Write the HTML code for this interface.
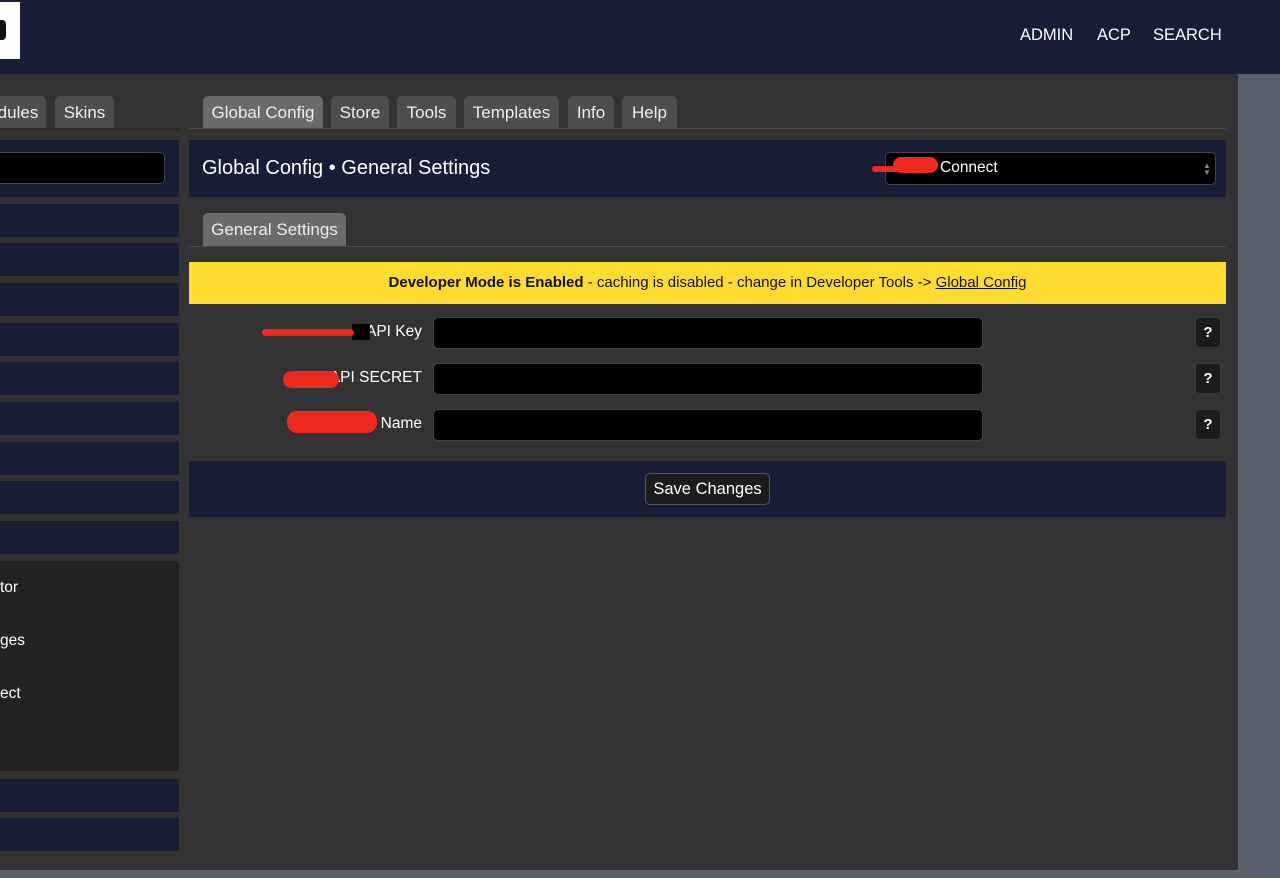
<!DOCTYPE html>
<html><head><meta charset="utf-8"><style>
*{box-sizing:border-box;margin:0;padding:0}
body{width:1280px;height:878px;overflow:hidden;background:#333;font-family:"Liberation Sans",sans-serif;color:#fff;position:relative}
.a{position:absolute}
.nav{background:#171e35}
.tab{position:absolute;top:96px;height:32px;background:#4e4e4e;border-radius:5px 5px 0 0;font-size:17px;line-height:33px;text-align:center;color:#eee}
.tab.on{background:#6b6b6b}
.inp{position:absolute;background:#000;border:1px solid #444;border-radius:5px}
.q{position:absolute;left:1195px;width:26px;height:31px;background:#1c1c1c;border:1px solid #3a3a3a;border-radius:4px;font-size:15px;font-weight:bold;text-align:center;line-height:29px}
.lbl{position:absolute;right:858px;font-size:15.5px}
.red{position:absolute;background:#ee2a1e;border-radius:10px}
</style></head><body>
<div class="a nav" style="left:0;top:0;width:1280px;height:74px"></div>
<div class="a" style="left:0;top:2px;width:20px;height:57px;background:#fff"></div>
<div class="a" style="left:0;top:20px;width:6px;height:20px;background:#111;border-radius:0 4px 4px 0"></div>
<div class="a" style="left:1020px;top:26px;font-size:16.5px">ADMIN</div>
<div class="a" style="left:1097px;top:26px;font-size:16.5px">ACP</div>
<div class="a" style="left:1153px;top:26px;font-size:16.5px">SEARCH</div>
<div class="a" style="left:1238px;top:74px;width:42px;height:804px;background:#5b616c"></div>
<div class="a" style="left:0;top:870px;width:1238px;height:8px;background:#5b616c"></div>

<div class="tab" style="left:-10px;width:56px">dules</div>
<div class="tab" style="left:55px;width:59px">Skins</div>
<div class="a" style="left:0;top:128px;width:179px;height:2px;background:#2a2a2a"></div>
<div class="a nav" style="left:0;top:140px;width:179px;height:57px"></div>
<div class="inp" style="left:-5px;top:152px;width:170px;height:32px"></div>
<div class="a nav" style="left:0;top:204px;width:179px;height:33px"></div>
<div class="a nav" style="left:0;top:243px;width:179px;height:33px"></div>
<div class="a nav" style="left:0;top:283px;width:179px;height:33px"></div>
<div class="a nav" style="left:0;top:323px;width:179px;height:33px"></div>
<div class="a nav" style="left:0;top:362px;width:179px;height:33px"></div>
<div class="a nav" style="left:0;top:402px;width:179px;height:33px"></div>
<div class="a nav" style="left:0;top:442px;width:179px;height:33px"></div>
<div class="a nav" style="left:0;top:481px;width:179px;height:33px"></div>
<div class="a nav" style="left:0;top:521px;width:179px;height:33px"></div>
<div class="a" style="left:0;top:561px;width:179px;height:210px;background:#232323"></div>
<div class="a" style="left:0;top:579px;font-size:15.5px">tor</div>
<div class="a" style="left:0;top:632px;font-size:15.5px">ges</div>
<div class="a" style="left:0;top:685px;font-size:15.5px">ect</div>
<div class="a nav" style="left:0;top:779px;width:179px;height:33px"></div>
<div class="a nav" style="left:0;top:818px;width:179px;height:33px"></div>

<div class="tab on" style="left:203px;width:120px">Global Config</div>
<div class="tab" style="left:331px;width:58px">Store</div>
<div class="tab" style="left:397px;width:59px">Tools</div>
<div class="tab" style="left:464px;width:95px">Templates</div>
<div class="tab" style="left:568px;width:46px">Info</div>
<div class="tab" style="left:622px;width:55px">Help</div>
<div class="a" style="left:189px;top:128px;width:1037px;height:1px;background:#4a4a4a"></div>
<div class="a nav" style="left:189px;top:140px;width:1037px;height:57px"></div>
<div class="a" style="left:202px;top:157px;font-size:20px">Global Config • General Settings</div>
<div class="inp" style="left:885px;top:152px;width:331px;height:33px"></div>
<div class="a" style="left:940px;top:159px;font-size:15.5px">Connect</div>
<div class="a" style="left:1203px;top:162px;font-size:8px;color:#888;line-height:7px">▲<br>▼</div>
<div class="red" style="left:872px;top:166px;width:36px;height:6px"></div>
<div class="red" style="left:893px;top:157px;width:45px;height:16px"></div>
<div class="tab on" style="left:203px;top:213px;width:143px;height:33px;line-height:34px">General Settings</div>
<div class="a" style="left:189px;top:246px;width:1037px;height:1px;background:#4a4a4a"></div>
<div class="a" style="left:189px;top:262px;width:1037px;height:42px;background:#fedb30;color:#111;font-size:15px;text-align:center;line-height:42px"><b>Developer Mode is Enabled</b> - caching is disabled - change in Developer Tools -&gt; <u>Global Config</u></div>
<div class="lbl" style="top:323px">API Key</div>
<div class="a" style="left:352px;top:324px;width:18px;height:16px;background:#000"></div>
<div class="red" style="left:262px;top:329px;width:92px;height:7px"></div>
<div class="inp" style="left:433px;top:317px;width:550px;height:32px"></div>
<div class="q" style="top:317px">?</div>
<div class="lbl" style="top:369px">API SECRET</div>
<div class="red" style="left:283px;top:371px;width:56px;height:17px"></div>
<div class="inp" style="left:433px;top:363px;width:550px;height:32px"></div>
<div class="q" style="top:363px">?</div>
<div class="lbl" style="top:415px">Name</div>
<div class="red" style="left:287px;top:411px;width:90px;height:22px"></div>
<div class="inp" style="left:433px;top:409px;width:550px;height:32px"></div>
<div class="q" style="top:409px">?</div>
<div class="a nav" style="left:189px;top:461px;width:1037px;height:56px"></div>
<div class="a" style="left:645px;top:473px;width:125px;height:32px;background:#1c1c1c;border:1px solid #555;border-radius:5px;font-size:16.5px;text-align:center;line-height:31px">Save Changes</div>
</body></html>
